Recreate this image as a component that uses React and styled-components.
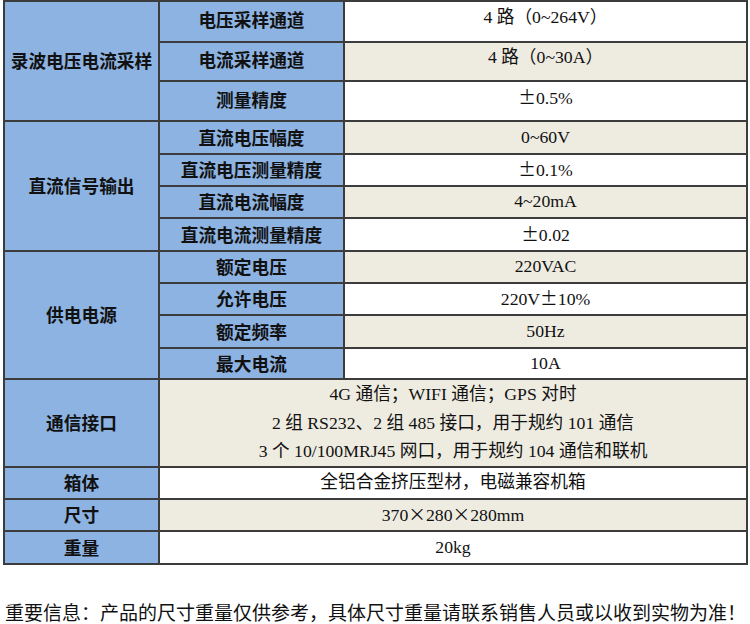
import React from 'react'
import { styled, createGlobalStyle } from 'styled-components'

const GlobalStyle = createGlobalStyle`
  html, body {
    margin: 0;
    padding: 0;
    background: #ffffff;
  }
`

const Page = styled.div`
  width: 750px;
  padding: 0 2px 0 3px;
  box-sizing: border-box;
`

const Table = styled.table`
  width: 745px;
  border-collapse: collapse;
  table-layout: fixed;
`

const Row = styled.tr`
  height: ${p => p.$h}px;
`

const Cell = styled.td`
  border: 2px solid #3c3c3c;
  padding: 0;
  text-align: center;
  vertical-align: middle;
  color: #111;
`

const Label = styled(Cell)`
  background: #8db3e2;
  font-family: "Noto Sans CJK SC", "Noto Sans", sans-serif;
  font-weight: 700;
  font-size: 17.7px;
  line-height: 1.2;
  padding-bottom: ${p => (p.$lift ? 3 : 0)}px;
`

const Value = styled(Cell)`
  background: ${p => (p.$alt ? '#eeece1' : '#ffffff')};
  font-family: "Liberation Serif", "Noto Sans CJK SC", serif;
  font-size: 17.7px;
  line-height: 1.2;
  font-weight: 400;
  padding-bottom: ${p => (p.$lift ? 7 : 0)}px;
`

const Wide = styled.span`
  display: inline-block;
  width: 1em;
  text-align: center;
  font-family: "Noto Sans CJK SC", sans-serif;
`

const Line = styled.div`
  height: 28.6px;
  line-height: 28.6px;
`

const Note = styled.div`
  margin: 36px 0 0 2px;
  font-family: "Liberation Serif", "Noto Sans CJK SC", serif;
  font-size: 19px;
  line-height: 26px;
  color: #111;
  white-space: nowrap;
`

// ± and × are full-width glyphs in the original
const widen = text =>
  text.split(/([±×])/).map((part, i) =>
    part === '±' || part === '×' ? <Wide key={i}>{part}</Wide> : part
  )

const groups = [
  {
    name: '录波电压电流采样',
    lift: true,
    rows: [
      ['电压采样通道', '4 路（0~264V）', 41],
      ['电流采样通道', '4 路（0~30A）', 39],
      ['测量精度', '±0.5%', 40],
    ],
  },
  {
    name: '直流信号输出',
    rows: [
      ['直流电压幅度', '0~60V', 33],
      ['直流电压测量精度', '±0.1%', 32],
      ['直流电流幅度', '4~20mA', 32],
      ['直流电流测量精度', '±0.02', 33],
    ],
  },
  {
    name: '供电电源',
    rows: [
      ['额定电压', '220VAC', 32],
      ['允许电压', '220V±10%', 32],
      ['额定频率', '50Hz', 33],
      ['最大电流', '10A', 31],
    ],
  },
]

const singles = [
  ['箱体', '全铝合金挤压型材，电磁兼容机箱', 32],
  ['尺寸', '370×280×280mm', 32],
  ['重量', '20kg', 33],
]

const App = () => {
  let idx = 0
  return (
    <Page>
      <GlobalStyle />
      <Table>
        <colgroup>
          <col style={{ width: 155 }} />
          <col style={{ width: 185 }} />
          <col />
        </colgroup>
        <tbody>
          {groups.map(g =>
            g.rows.map((r, i) => {
              const alt = idx++ % 2 === 1
              return (
                <Row key={g.name + i} $h={r[2]}>
                  {i === 0 && <Label rowSpan={g.rows.length}>{g.name}</Label>}
                  <Label $lift={g.lift}>{r[0]}</Label>
                  <Value $alt={alt} $lift={g.lift}>{widen(r[1])}</Value>
                </Row>
              )
            })
          )}
          <Row $h={86}>
            <Label>通信接口</Label>
            <Value colSpan={2} $alt>
              <Line>4G 通信；WIFI 通信；GPS 对时</Line>
              <Line>2 组 RS232、2 组 485 接口，用于规约 101 通信</Line>
              <Line>3 个 10/100MRJ45 网口，用于规约 104 通信和联机</Line>
            </Value>
          </Row>
          {singles.map((s, i) => (
            <Row key={s[0]} $h={s[2]}>
              <Label>{s[0]}</Label>
              <Value colSpan={2} $alt={i % 2 === 1}>{widen(s[1])}</Value>
            </Row>
          ))}
        </tbody>
      </Table>
      <Note>重要信息：产品的尺寸重量仅供参考，具体尺寸重量请联系销售人员或以收到实物为准！</Note>
    </Page>
  )
}

export default App
